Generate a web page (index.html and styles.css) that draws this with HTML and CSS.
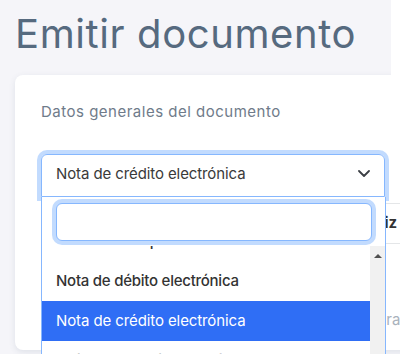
FILE: index.html
```html
<!DOCTYPE html>
<html lang="es">
<head>
<meta charset="utf-8">
<link rel="stylesheet" href="styles.css">
</head>
<body>
<div class="top">
  <h1 class="title">Emitir documento</h1>
  <div class="edge"></div>
</div>
<div class="card">
  <div class="label">Datos generales del documento</div>
  <div class="field">
    <div class="select">
      <span class="select-text">Nota de crédito electrónica</span>
      <svg class="chev" viewBox="0 0 12 7" aria-hidden="true"><path d="M1 1l5 5 5-5" fill="none" stroke="#3b3f45" stroke-width="1.8" stroke-linecap="round" stroke-linejoin="round"/></svg>
    </div>
    <div class="dropdown">
      <div class="search"><input class="search-input" type="text"></div>
      <div class="results">
        <ul class="options">
          <li class="opt">Factura de exportación</li>
          <li class="opt">Nota de débito electrónica</li>
          <li class="opt active">Nota de crédito electrónica</li>
          <li class="opt">Guía de remisión electrónica</li>
        </ul>
        <div class="scrollbar"><span class="arrow"></span></div>
      </div>
    </div>
  </div>
  <div class="table">
    <div class="thead"><span class="th">Matriz</span></div>
    <div class="trow"><span class="placeholder">Compra</span></div>
  </div>
</div>
</body>
</html>
```

FILE: styles.css
```css
html, body {
  margin: 0;
  overflow: hidden;
}
body {
  width: 400px;
  height: 354px;
  background: #f5f5f9;
  font-family: Inter, "Noto Sans", sans-serif;
}
.top {
  display: flex;
  height: 75px;
}
.title {
  flex: 1;
  margin: 10px 0 0 15px;
  font-size: 40px;
  line-height: 48px;
  font-weight: 400;
  letter-spacing: 0.6px;
  color: #566a7f;
  white-space: nowrap;
}
.edge {
  width: 9px;
  background: #fff;
}
.card {
  margin-left: 15px;
  width: 420px;
  height: 275px;
  box-sizing: border-box;
  padding: 26px 0 0 26px;
  background: #fff;
  border-radius: 8px;
  box-shadow: 0 2px 6px rgba(67, 89, 113, 0.12);
}
.label {
  font-size: 15px;
  line-height: 22px;
  letter-spacing: 0.5px;
  color: #6f7b8a;
}
.field {
  position: relative;
  width: 344px;
  margin-top: 31px;
}
.select {
  height: 43px;
  box-sizing: border-box;
  display: flex;
  align-items: center;
  justify-content: space-between;
  padding: 0 14px 4px 14px;
  border: 1px solid #86b7fe;
  border-radius: 6px 6px 0 0;
  box-shadow: 0 0 0 4px rgba(13, 110, 253, 0.25);
  font-size: 15px;
  letter-spacing: -0.1px;
  color: #3a3a3a;
}
.chev {
  width: 12px;
  height: 7px;
}
.dropdown {
  position: absolute;
  top: 100%;
  left: 0;
  width: 345px;
  box-sizing: border-box;
  border: 1px solid #86b7fe;
  border-top: 0;
  background: #fff;
  z-index: 2;
}
.search {
  padding: 6px 13px 5px 14px;
}
.search-input {
  display: block;
  width: 100%;
  height: 38px;
  box-sizing: border-box;
  margin: 0;
  border: 1px solid #86b7fe;
  border-radius: 6px;
  box-shadow: 0 0 0 4px rgba(13, 110, 253, 0.25);
  outline: none;
  background: #fff;
}
.results {
  display: flex;
  height: 130px;
}
.options {
  flex: 1;
  margin: 0;
  padding: 0;
  list-style: none;
  overflow: hidden;
}
.opt {
  height: 40px;
  box-sizing: border-box;
  padding: 8px 14px;
  line-height: 24px;
  font-size: 15px;
  font-weight: 500;
  letter-spacing: -0.25px;
  color: #333;
  white-space: nowrap;
}
.opt:first-child {
  margin-top: -25px;
}
.opt.active {
  background: #2f6ef5;
  color: #fff;
  font-weight: 400;
  letter-spacing: -0.1px;
}
.scrollbar {
  width: 15px;
  background: #f1f1f1;
  display: flex;
  flex-direction: column;
  align-items: center;
}
.arrow {
  margin-top: 8px;
  width: 0;
  height: 0;
  border-left: 4px solid transparent;
  border-right: 4px solid transparent;
  border-bottom: 4px solid #505050;
}
.table {
  margin-top: 6px;
  width: 394px;
}
.thead {
  height: 41px;
  box-sizing: border-box;
  border-top: 1px solid #e4e6e8;
  border-bottom: 1px solid #e4e6e8;
  padding: 7px 0 0 309px;
  font-size: 15px;
  line-height: 24px;
  font-weight: 700;
  color: #333;
  white-space: nowrap;
}
.trow {
  padding: 64px 0 0 303px;
  font-size: 15px;
  line-height: 24px;
  color: #a9b2bc;
  white-space: nowrap;
}
```
